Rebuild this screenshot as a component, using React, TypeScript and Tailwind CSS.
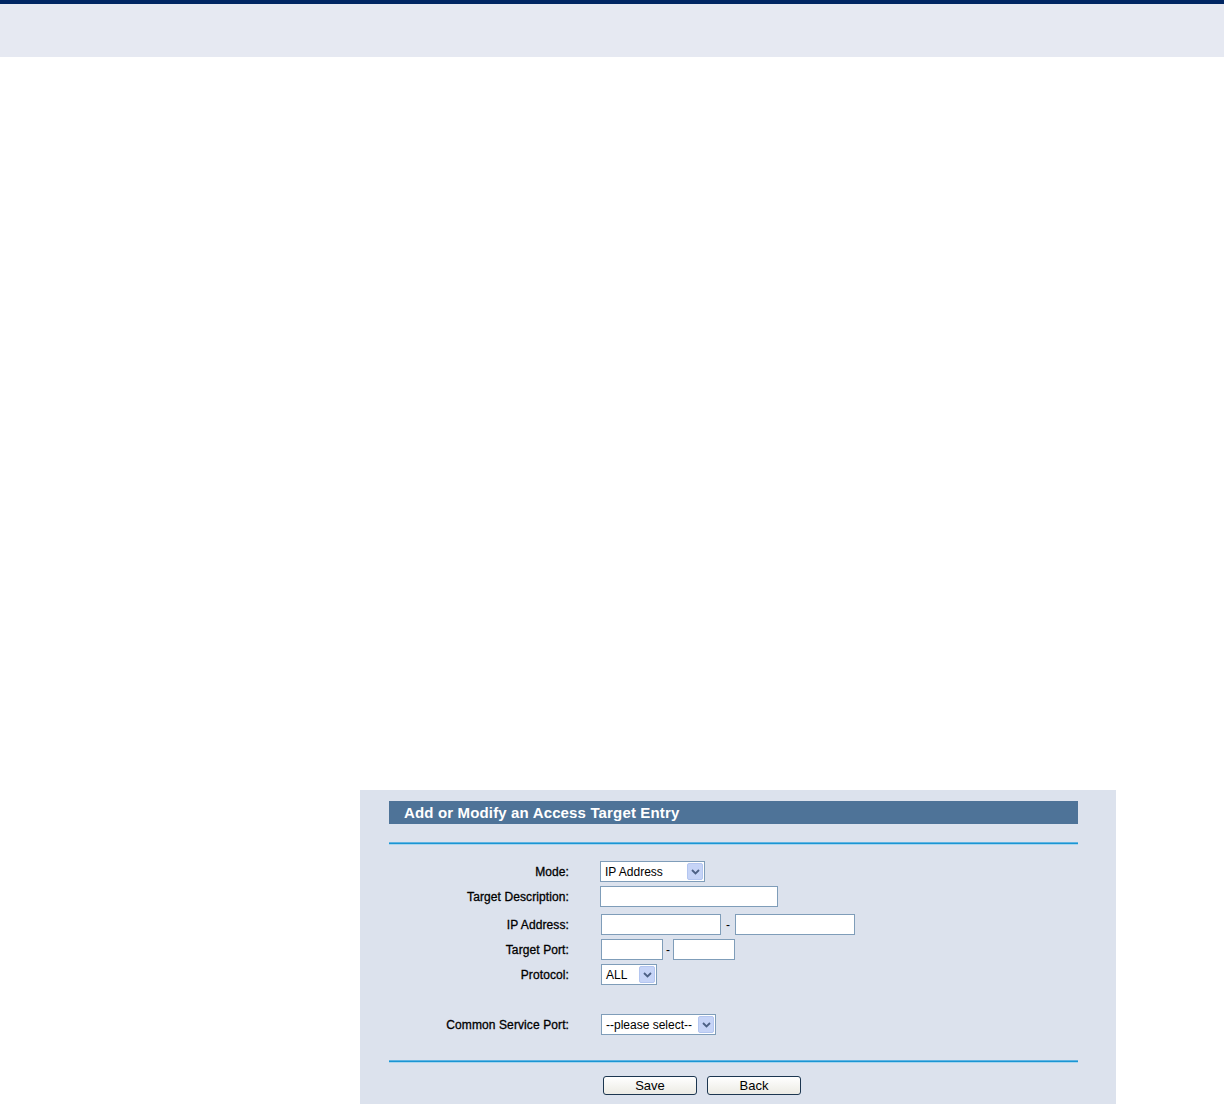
import React from "react";

const font = { fontFamily: '"Liberation Sans", Arial, sans-serif' };

function Arrow() {
  return (
    <div className="absolute right-[1px] top-[1px] bottom-[1px] w-[16px] bg-[#c6d4f7] border border-[#b4c6f0] rounded-[2px] flex items-center justify-center">
      <svg width="9" height="6" viewBox="0 0 9 6">
        <path d="M1 1 L4.5 4.5 L8 1" fill="none" stroke="#4d6185" strokeWidth="1.8" />
      </svg>
    </div>
  );
}

function Select({ w, text }: { w: string; text: string }) {
  return (
    <div className={`relative ${w} h-[21px] bg-white border border-[#7f9db9] flex items-center pl-[4px] text-[12px] text-black`}>
      <span>{text}</span>
      <Arrow />
    </div>
  );
}

function Input({ w }: { w: string }) {
  return <div className={`${w} h-[21px] bg-white border border-[#7f9db9]`} />;
}

function Row({ label, children, cls }: { label: string; children: React.ReactNode; cls: string }) {
  return (
    <div className={`flex items-center ${cls}`}>
      <div className="w-[209px] text-right text-[12px] text-black tracking-[0.1px] leading-none [-webkit-text-stroke:0.3px_black]">{label}</div>
      <div className="ml-[32px] flex items-center">{children}</div>
    </div>
  );
}

function Line() {
  return (
    <div className="ml-[29px] w-[689px]">
      <div className="h-[1px] bg-[#5fb4e2]" />
      <div className="h-[1px] bg-[#1b95d3]" />
      <div className="h-[1px] bg-[#a9d5ee]" />
    </div>
  );
}

function Button({ text }: { text: string }) {
  return (
    <div className="w-[94px] h-[19px] rounded-[3px] border border-[#1c3650] bg-gradient-to-b from-[#ffffff] to-[#ecebe4] flex items-center justify-center text-[13px] text-black leading-none">
      {text}
    </div>
  );
}

export default function App() {
  return (
    <div className="w-[1224px] h-[1104px] bg-white overflow-hidden" style={font}>
      <div className="h-[4px] bg-[#002663]" />
      <div className="h-[53px] bg-[#e6e9f2]" />
      <div className="h-[733px]" />
      <div className="ml-[360px] w-[756px] h-[400px] bg-[#dce2ed] pt-[11px]">
        <div className="ml-[29px] w-[689px] h-[23px] bg-[#4e7398] flex items-center pl-[15px]">
          <span className="text-white font-bold text-[15px] tracking-[0.15px] leading-none">Add or Modify an Access Target Entry</span>
        </div>
        <div className="mt-[18px]">
          <Line />
        </div>
        <Row label="Mode:" cls="mt-[16px]">
          <div className="-ml-px">
            <Select w="w-[105px]" text="IP Address" />
          </div>
        </Row>
        <Row label="Target Description:" cls="mt-[4px]">
          <div className="-ml-px">
            <Input w="w-[178px]" />
          </div>
        </Row>
        <Row label="IP Address:" cls="mt-[7px]">
          <Input w="w-[120px]" />
          <span className="mx-[5px] text-[12px] text-black">-</span>
          <Input w="w-[120px]" />
        </Row>
        <Row label="Target Port:" cls="mt-[4px]">
          <Input w="w-[62px]" />
          <span className="mx-[3px] text-[12px] text-black">-</span>
          <Input w="w-[62px]" />
        </Row>
        <Row label="Protocol:" cls="mt-[4px]">
          <Select w="w-[56px]" text="ALL" />
        </Row>
        <Row label="Common Service Port:" cls="mt-[29px]">
          <Select w="w-[115px]" text="--please select--" />
        </Row>
        <div className="mt-[25px]">
          <Line />
        </div>
        <div className="mt-[13px] ml-[243px] flex gap-[10px]">
          <Button text="Save" />
          <Button text="Back" />
        </div>
      </div>
    </div>
  );
}
